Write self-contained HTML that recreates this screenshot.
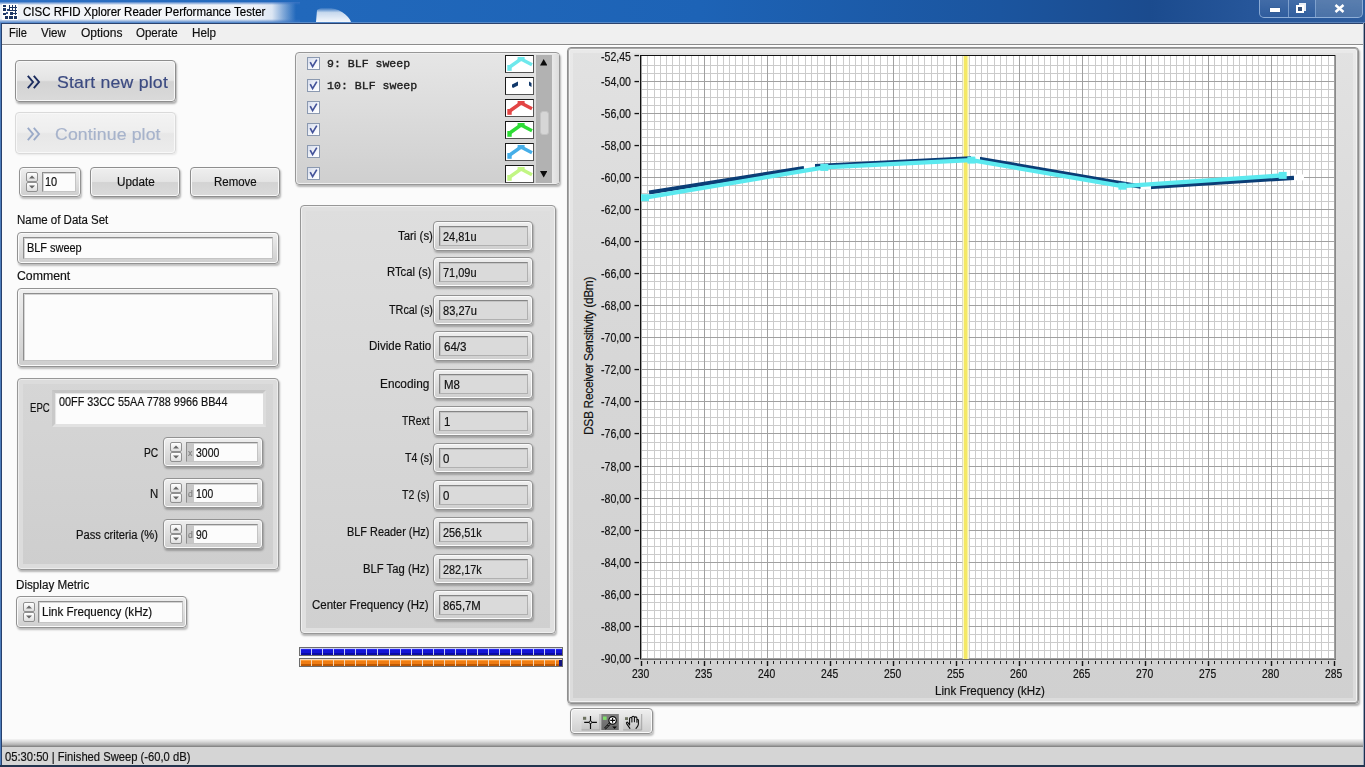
<!DOCTYPE html><html><head><meta charset="utf-8"><title>CISC RFID Xplorer Reader Performance Tester</title><style>
*{box-sizing:border-box;margin:0;padding:0}
html,body{width:1365px;height:767px;overflow:hidden;background:#fbfbfb}
body{font-family:"Liberation Sans",sans-serif;font-size:12px;color:#111;position:relative}
.a{position:absolute}
.t{position:absolute;white-space:nowrap}
.frame{position:absolute;border:1px solid #929292;border-radius:4px;background:linear-gradient(#efefef,#e0e0e0 45%,#cecece);box-shadow:1px 2px 2px rgba(0,0,0,.25), inset 0 0 0 1px #fafafa}
.btn{position:absolute;border:1px solid #8e8e8e;border-radius:4px;background:linear-gradient(#efefef 0,#e4e4e4 48%,#d3d3d3 52%,#dadada 100%);box-shadow:1px 2px 2px rgba(0,0,0,.3), inset 0 0 0 1px #f8f8f8}
.inw{position:absolute;background:#fcfcfc;border:1px solid #8e8e8e;border-right-color:#c4c4c4;border-bottom-color:#c4c4c4;box-shadow:inset 1px 1px 0 #d4d4d4}
.ing{position:absolute;background:#dadada;border:1px solid #858585;border-right-color:#b0b0b0;border-bottom-color:#b0b0b0;box-shadow:inset 1px 1px 0 #c4c4c4}
.panel{position:absolute;border:1px solid #979797;border-radius:4px;box-shadow:1px 2px 2px rgba(0,0,0,.28)}
</style></head><body>
<div class="a" style="left:0;top:0;width:1365px;height:23px;background:linear-gradient(90deg,#2e70c4 0,#2168bb 300px,#1d63b6 700px,#1b559f 1000px,#1b4b8e 1150px,#26569a 1250px,#2c5c9e 1365px)"></div>
<svg class="a" style="left:310px;top:0" width="50" height="23" viewBox="0 0 50 23"><defs><linearGradient id="sk" x1="0" y1="0" x2="0" y2="1"><stop offset="0" stop-color="#fff" stop-opacity="0"/><stop offset="0.35" stop-color="#fff" stop-opacity="0.75"/><stop offset="1" stop-color="#fff" stop-opacity="0.95"/></linearGradient></defs><path d="M6 22 L7 10 C12 6 24 7 32 12 C37 15 40 19 41 22 Z" fill="url(#sk)" style="filter:blur(.6px)"/></svg>
<div class="a" style="left:0;top:2px;width:330px;height:20px;background:linear-gradient(90deg,#edf1f7 0,#f5f7fa 120px,#eef2f8 255px,rgba(236,241,248,.92) 272px,rgba(232,238,247,.45) 284px,rgba(232,238,247,0) 296px)"></div>
<div class="a" style="left:0;top:2px;width:300px;height:3px;background:linear-gradient(rgba(58,116,196,.9),rgba(58,116,196,0))"></div>
<div class="a" style="left:0;top:19px;width:300px;height:3px;background:linear-gradient(rgba(58,116,196,0),rgba(58,116,196,.7))"></div>
<div class="a" style="left:0;top:22px;width:1365px;height:1px;background:rgba(150,180,220,.45)"></div>
<svg class="a" style="left:2px;top:4px" width="16" height="16" viewBox="0 0 16 16" shape-rendering="crispEdges"><rect width="16" height="16" fill="#fdfdfd"/><g fill="#1b3563"><rect x="1" y="1" width="3" height="2"/><rect x="1" y="4" width="3" height="3"/><rect x="4.5" y="4.5" width="3" height="2.5" fill="#2b477a"/><rect x="1" y="8.5" width="3" height="2.2"/><rect x="4" y="7.5" width="2" height="2" fill="#3a568a"/><rect x="7.5" y="8" width="3.5" height="2.8"/><rect x="3" y="11.8" width="3" height="3"/><rect x="6.8" y="11.8" width="4.4" height="3"/><rect x="12" y="11.8" width="3" height="3"/><rect x="7" y="1" width="1" height="6"/><rect x="10" y="1" width="1" height="6"/><rect x="13" y="1" width="1" height="10"/><rect x="6.5" y="3" width="8.5" height="0.8"/><rect x="6.5" y="6" width="8.5" height="0.8"/><rect x="11" y="9" width="4" height="0.8"/></g></svg>
<div class="t" style="left:23.20px;top:4.44px;font-size:12px;line-height:16px;height:16px;letter-spacing:0.000px;color:#000;font-family:'Liberation Sans',sans-serif;-webkit-text-stroke:0.18px #000;transform-origin:0 0;transform:scaleX(0.9598);">CISC RFID Xplorer Reader Performance Tester</div>
<div class="a" style="left:1259px;top:-4px;width:104px;height:22px;border:1px solid rgba(190,215,245,.6);border-radius:0 0 5px 5px;background:linear-gradient(rgba(255,255,255,.14),rgba(255,255,255,.04))"></div>
<div class="a" style="left:1288px;top:0;width:1px;height:17px;background:rgba(190,215,245,.5)"></div>
<div class="a" style="left:1315px;top:0;width:1px;height:17px;background:rgba(190,215,245,.5)"></div>
<div class="a" style="left:1316px;top:0;width:46px;height:17px;background:rgba(150,170,190,.25)"></div>
<div class="a" style="left:1270px;top:8px;width:10px;height:4px;background:#fff;box-shadow:0 0 1px #234"></div>
<div class="a" style="left:1299px;top:3px;width:7px;height:8px;border:2px solid #e8eef6"></div><div class="a" style="left:1296px;top:5px;width:8px;height:8px;border:2.5px solid #fff;background:#35507a"></div>
<svg class="a" style="left:1334px;top:3.5px" width="11" height="9" viewBox="0 0 11 9"><path d="M1.5 1 L9.5 8 M9.5 1 L1.5 8" stroke="#fff" stroke-width="2.5"/></svg>
<div class="a" style="left:0;top:23px;width:1365px;height:22px;background:#f0f0f0;border-bottom:1px solid #8c8c8c;border-top:1px solid #2b436e"></div>
<div class="a" style="left:0;top:45px;width:1365px;height:1px;background:#fff"></div>
<div class="t" style="left:9.20px;top:24.74px;font-size:12px;line-height:16px;height:16px;letter-spacing:0.000px;color:#111;font-family:'Liberation Sans',sans-serif;-webkit-text-stroke:0.18px #111;transform-origin:0 0;transform:scaleX(0.9251);">File</div>
<div class="t" style="left:41.00px;top:24.74px;font-size:12px;line-height:16px;height:16px;letter-spacing:0.000px;color:#111;font-family:'Liberation Sans',sans-serif;-webkit-text-stroke:0.18px #111;transform-origin:0 0;transform:scaleX(0.9671);">View</div>
<div class="t" style="left:80.60px;top:24.74px;font-size:12px;line-height:16px;height:16px;letter-spacing:0.000px;color:#111;font-family:'Liberation Sans',sans-serif;-webkit-text-stroke:0.18px #111;transform-origin:0 0;transform:scaleX(1.0012);">Options</div>
<div class="t" style="left:136.40px;top:24.74px;font-size:12px;line-height:16px;height:16px;letter-spacing:0.000px;color:#111;font-family:'Liberation Sans',sans-serif;-webkit-text-stroke:0.18px #111;transform-origin:0 0;transform:scaleX(0.9596);">Operate</div>
<div class="t" style="left:192.40px;top:24.74px;font-size:12px;line-height:16px;height:16px;letter-spacing:0.000px;color:#111;font-family:'Liberation Sans',sans-serif;-webkit-text-stroke:0.18px #111;transform-origin:0 0;transform:scaleX(0.9717);">Help</div>
<div class="a" style="left:0;top:23px;width:2px;height:744px;background:linear-gradient(90deg,#4d7dbc 0,#4d7dbc 55%,#27406c 56%)"></div>
<div class="a" style="left:1363px;top:23px;width:2px;height:744px;background:linear-gradient(90deg,#9aa6ba 0,#9aa6ba 40%,#1c3050 41%)"></div>
<div class="btn" style="left:15px;top:60px;width:161px;height:42px"></div>
<svg class="a" style="left:27px;top:74.5px" width="14" height="14" viewBox="0 0 14 14"><path d="M0.8 0.8 L6 7 L0.8 13.2 M6.8 0.8 L12 7 L6.8 13.2" fill="none" stroke="#1b2c5e" stroke-width="1.9"/></svg>
<div class="t" style="left:57.40px;top:71.51px;font-size:17px;line-height:22px;height:22px;letter-spacing:0.199px;color:#3b4a80;font-family:'Liberation Sans',sans-serif;-webkit-text-stroke:0.18px #3b4a80;transform-origin:0 0;transform:scaleX(1.0400);">Start new plot</div>
<div class="btn" style="left:15px;top:112px;width:161px;height:42px;border-color:#dadada;background:linear-gradient(#f3f3f3 0,#eeeeee 48%,#e7e7e7 52%,#ececec 100%);box-shadow:1px 1px 2px rgba(0,0,0,.08), inset 0 0 0 1px #f8f8f8"></div>
<svg class="a" style="left:27px;top:126.5px" width="14" height="14" viewBox="0 0 14 14"><path d="M0.8 0.8 L6 7 L0.8 13.2 M6.8 0.8 L12 7 L6.8 13.2" fill="none" stroke="#9aaac8" stroke-width="1.9"/></svg>
<div class="t" style="left:54.50px;top:123.91px;font-size:17px;line-height:22px;height:22px;letter-spacing:0.104px;color:#a7b3cb;font-family:'Liberation Sans',sans-serif;-webkit-text-stroke:0.18px #a7b3cb;transform-origin:0 0;transform:scaleX(1.0400);">Continue plot</div>
<div class="frame" style="left:19px;top:167px;width:62px;height:30px"></div>
<div class="a" style="left:26px;top:172px;width:12px;height:10px;border:1px solid #909090;border-radius:2px;background:linear-gradient(#ffffff,#dedede)"></div>
<div class="a" style="left:26px;top:182px;width:12px;height:10px;border:1px solid #909090;border-radius:2px;background:linear-gradient(#ffffff,#dedede)"></div>
<svg class="a" style="left:29px;top:175px" width="6" height="14" viewBox="0 0 6 14"><path d="M0 3.6 L3 0.4 L6 3.6 Z M0 10.4 L3 13.6 L6 10.4 Z" fill="#666"/></svg>
<div class="inw" style="left:42px;top:172px;width:34px;height:20px"></div>
<div class="t" style="left:45.40px;top:174.44px;font-size:12px;line-height:16px;height:16px;letter-spacing:0.000px;color:#111;font-family:'Liberation Sans',sans-serif;-webkit-text-stroke:0.18px #111;transform-origin:0 0;transform:scaleX(0.9139);">10</div>
<div class="btn" style="left:90px;top:167px;width:90px;height:30px"></div>
<div class="t" style="left:117.40px;top:173.84px;font-size:12px;line-height:16px;height:16px;letter-spacing:0.000px;color:#111;font-family:'Liberation Sans',sans-serif;-webkit-text-stroke:0.18px #111;transform-origin:0 0;transform:scaleX(0.9742);">Update</div>
<div class="btn" style="left:190px;top:167px;width:90px;height:30px"></div>
<div class="t" style="left:214.30px;top:173.84px;font-size:12px;line-height:16px;height:16px;letter-spacing:0.000px;color:#111;font-family:'Liberation Sans',sans-serif;-webkit-text-stroke:0.18px #111;transform-origin:0 0;transform:scaleX(0.9553);">Remove</div>
<div class="t" style="left:16.60px;top:211.94px;font-size:12px;line-height:16px;height:16px;letter-spacing:0.000px;color:#111;font-family:'Liberation Sans',sans-serif;-webkit-text-stroke:0.18px #111;transform-origin:0 0;transform:scaleX(0.9570);">Name of Data Set</div>
<div class="frame" style="left:17px;top:232px;width:262px;height:32px"></div>
<div class="inw" style="left:23px;top:237px;width:250px;height:22px"></div>
<div class="t" style="left:27.30px;top:240.34px;font-size:12px;line-height:16px;height:16px;letter-spacing:0.000px;color:#111;font-family:'Liberation Sans',sans-serif;-webkit-text-stroke:0.18px #111;transform-origin:0 0;transform:scaleX(0.9109);">BLF sweep</div>
<div class="t" style="left:16.60px;top:268.04px;font-size:12px;line-height:16px;height:16px;letter-spacing:0.000px;color:#111;font-family:'Liberation Sans',sans-serif;-webkit-text-stroke:0.18px #111;transform-origin:0 0;transform:scaleX(1.0231);">Comment</div>
<div class="frame" style="left:17px;top:288px;width:262px;height:79px"></div>
<div class="inw" style="left:23px;top:293px;width:250px;height:68px"></div>
<div class="panel" style="left:17px;top:378px;width:262px;height:192px;background:linear-gradient(#d6d6d6,#cecece);box-shadow:1px 2px 2px rgba(0,0,0,.28), inset 0 0 0 1px #ececec, inset 0 0 0 5px #dcdcdc"></div>
<div class="t" style="left:29.50px;top:399.54px;font-size:12px;line-height:16px;height:16px;letter-spacing:0.000px;color:#111;font-family:'Liberation Sans',sans-serif;-webkit-text-stroke:0.18px #111;transform-origin:0 0;transform:scaleX(0.7992);">EPC</div>
<div class="a" style="left:52px;top:390px;width:214px;height:37px;background:#fcfcfc;border:3px solid #e2e2e2;border-top-color:#c4c4c4;border-left-color:#c9c9c9;border-right-color:#dcdcdc;box-shadow:inset 1px 1px 1px #e4e4e4"></div>
<div class="t" style="left:58.70px;top:394.14px;font-size:12px;line-height:16px;height:16px;letter-spacing:0.000px;color:#111;font-family:'Liberation Sans',sans-serif;-webkit-text-stroke:0.18px #111;transform-origin:0 0;transform:scaleX(0.9015);">00FF 33CC 55AA 7788 9966 BB44</div>
<div class="frame" style="left:163px;top:437px;width:100px;height:30px"></div>
<div class="a" style="left:169.5px;top:442px;width:12px;height:10px;border:1px solid #909090;border-radius:2px;background:linear-gradient(#ffffff,#dedede)"></div>
<div class="a" style="left:169.5px;top:452px;width:12px;height:10px;border:1px solid #909090;border-radius:2px;background:linear-gradient(#ffffff,#dedede)"></div>
<svg class="a" style="left:172.5px;top:445px" width="6" height="14" viewBox="0 0 6 14"><path d="M0 3.6 L3 0.4 L6 3.6 Z M0 10.4 L3 13.6 L6 10.4 Z" fill="#666"/></svg>
<div class="inw" style="left:186px;top:442px;width:72px;height:20px"></div>
<div class="a" style="left:187px;top:443px;width:7px;height:18px;background:#c8c8c8"></div>
<div class="t" style="left:188.00px;top:446.88px;font-size:9px;line-height:13px;height:13px;letter-spacing:0.000px;color:#808080;font-family:'Liberation Sans',sans-serif;-webkit-text-stroke:0.18px #808080;transform-origin:0 0;transform:scaleX(0.9550);">x</div>
<div class="t" style="left:196.10px;top:444.64px;font-size:12px;line-height:16px;height:16px;letter-spacing:0.000px;color:#111;font-family:'Liberation Sans',sans-serif;-webkit-text-stroke:0.18px #111;transform-origin:0 0;transform:scaleX(0.8727);">3000</div>
<div class="t" style="left:143.60px;top:444.64px;font-size:12px;line-height:16px;height:16px;letter-spacing:0.000px;color:#111;font-family:'Liberation Sans',sans-serif;-webkit-text-stroke:0.18px #111;transform-origin:0 0;transform:scaleX(0.8529);">PC</div>
<div class="frame" style="left:163px;top:478px;width:100px;height:30px"></div>
<div class="a" style="left:169.5px;top:483px;width:12px;height:10px;border:1px solid #909090;border-radius:2px;background:linear-gradient(#ffffff,#dedede)"></div>
<div class="a" style="left:169.5px;top:493px;width:12px;height:10px;border:1px solid #909090;border-radius:2px;background:linear-gradient(#ffffff,#dedede)"></div>
<svg class="a" style="left:172.5px;top:486px" width="6" height="14" viewBox="0 0 6 14"><path d="M0 3.6 L3 0.4 L6 3.6 Z M0 10.4 L3 13.6 L6 10.4 Z" fill="#666"/></svg>
<div class="inw" style="left:186px;top:483px;width:72px;height:20px"></div>
<div class="a" style="left:187px;top:484px;width:7px;height:18px;background:#c8c8c8"></div>
<div class="t" style="left:188.00px;top:487.88px;font-size:9px;line-height:13px;height:13px;letter-spacing:0.000px;color:#808080;font-family:'Liberation Sans',sans-serif;-webkit-text-stroke:0.18px #808080;transform-origin:0 0;transform:scaleX(0.9550);">d</div>
<div class="t" style="left:196.10px;top:485.64px;font-size:12px;line-height:16px;height:16px;letter-spacing:0.000px;color:#111;font-family:'Liberation Sans',sans-serif;-webkit-text-stroke:0.18px #111;transform-origin:0 0;transform:scaleX(0.8550);">100</div>
<div class="t" style="left:149.60px;top:485.64px;font-size:12px;line-height:16px;height:16px;letter-spacing:0.000px;color:#111;font-family:'Liberation Sans',sans-serif;-webkit-text-stroke:0.18px #111;transform-origin:0 0;transform:scaleX(0.9480);">N</div>
<div class="frame" style="left:163px;top:519px;width:100px;height:30px"></div>
<div class="a" style="left:169.5px;top:524px;width:12px;height:10px;border:1px solid #909090;border-radius:2px;background:linear-gradient(#ffffff,#dedede)"></div>
<div class="a" style="left:169.5px;top:534px;width:12px;height:10px;border:1px solid #909090;border-radius:2px;background:linear-gradient(#ffffff,#dedede)"></div>
<svg class="a" style="left:172.5px;top:527px" width="6" height="14" viewBox="0 0 6 14"><path d="M0 3.6 L3 0.4 L6 3.6 Z M0 10.4 L3 13.6 L6 10.4 Z" fill="#666"/></svg>
<div class="inw" style="left:186px;top:524px;width:72px;height:20px"></div>
<div class="a" style="left:187px;top:525px;width:7px;height:18px;background:#c8c8c8"></div>
<div class="t" style="left:188.00px;top:528.88px;font-size:9px;line-height:13px;height:13px;letter-spacing:0.000px;color:#808080;font-family:'Liberation Sans',sans-serif;-webkit-text-stroke:0.18px #808080;transform-origin:0 0;transform:scaleX(0.9550);">d</div>
<div class="t" style="left:196.10px;top:526.64px;font-size:12px;line-height:16px;height:16px;letter-spacing:0.000px;color:#111;font-family:'Liberation Sans',sans-serif;-webkit-text-stroke:0.18px #111;transform-origin:0 0;transform:scaleX(0.8614);">90</div>
<div class="t" style="left:76.40px;top:526.64px;font-size:12px;line-height:16px;height:16px;letter-spacing:0.000px;color:#111;font-family:'Liberation Sans',sans-serif;-webkit-text-stroke:0.18px #111;transform-origin:0 0;transform:scaleX(0.9318);">Pass criteria (%)</div>
<div class="t" style="left:15.80px;top:576.84px;font-size:12px;line-height:16px;height:16px;letter-spacing:0.000px;color:#111;font-family:'Liberation Sans',sans-serif;-webkit-text-stroke:0.18px #111;transform-origin:0 0;transform:scaleX(0.9728);">Display Metric</div>
<div class="frame" style="left:16px;top:596px;width:171px;height:32px"></div>
<div class="a" style="left:22.5px;top:601.5px;width:12px;height:10px;border:1px solid #909090;border-radius:2px;background:linear-gradient(#ffffff,#dedede)"></div>
<div class="a" style="left:22.5px;top:611.5px;width:12px;height:10px;border:1px solid #909090;border-radius:2px;background:linear-gradient(#ffffff,#dedede)"></div>
<svg class="a" style="left:25.5px;top:604.5px" width="6" height="14" viewBox="0 0 6 14"><path d="M0 3.6 L3 0.4 L6 3.6 Z M0 10.4 L3 13.6 L6 10.4 Z" fill="#666"/></svg>
<div class="inw" style="left:38px;top:601px;width:145px;height:22px"></div>
<div class="t" style="left:42.30px;top:603.84px;font-size:12px;line-height:16px;height:16px;letter-spacing:0.000px;color:#111;font-family:'Liberation Sans',sans-serif;-webkit-text-stroke:0.18px #111;transform-origin:0 0;transform:scaleX(0.9662);">Link Frequency (kHz)</div>
<div class="panel" style="left:295px;top:52px;width:265px;height:133px;background:linear-gradient(#e6e6e6,#cfcfcf);box-shadow:1px 2px 2px rgba(0,0,0,.28), inset 0 0 0 1px #eee"></div>
<div class="a" style="left:552px;top:54px;width:7px;height:129px;background:linear-gradient(90deg,#e9e9e9,#dcdcdc)"></div>
<div class="a" style="left:307px;top:57px;width:13px;height:13px;border:1px solid #8b99b0;background:linear-gradient(135deg,#d5dcec,#f4f6fb 60%,#fff)"></div>
<svg class="a" style="left:308px;top:58px" width="11" height="11" viewBox="0 0 11 11"><path d="M2.2 4.2 L4.6 8.6 L8.8 1.6" fill="none" stroke="#44539a" stroke-width="1.7"/></svg>
<div class="a" style="left:505px;top:55px;width:29px;height:18px;background:#fff;border:1px solid #1a1a1a;border-right-color:#555;border-bottom-color:#555"></div>
<svg class="a" style="left:506px;top:56px" width="27" height="16" viewBox="0 0 27 16"><path d="M3 11.5 L15 3 L26 8.8" fill="none" stroke="#6ee8ec" stroke-width="3.5"/><rect x="1.3" y="9" width="4.4" height="5.8" fill="#6ee8ec"/><rect x="11.6" y="1" width="7" height="3.4" fill="#6ee8ec"/></svg>
<div class="a" style="left:307px;top:79px;width:13px;height:13px;border:1px solid #8b99b0;background:linear-gradient(135deg,#d5dcec,#f4f6fb 60%,#fff)"></div>
<svg class="a" style="left:308px;top:80px" width="11" height="11" viewBox="0 0 11 11"><path d="M2.2 4.2 L4.6 8.6 L8.8 1.6" fill="none" stroke="#44539a" stroke-width="1.7"/></svg>
<div class="a" style="left:505px;top:77px;width:29px;height:18px;background:#fff;border:1px solid #1a1a1a;border-right-color:#555;border-bottom-color:#555"></div>
<svg class="a" style="left:506px;top:78px" width="27" height="16" viewBox="0 0 27 16"><path d="M6 6.5 L12 3.5 L12 7.5 L7 10 L6 9Z M23 3.5 L25.5 5 L25.5 9 L23 7.5Z" fill="#12396b"/></svg>
<div class="a" style="left:307px;top:101px;width:13px;height:13px;border:1px solid #8b99b0;background:linear-gradient(135deg,#d5dcec,#f4f6fb 60%,#fff)"></div>
<svg class="a" style="left:308px;top:102px" width="11" height="11" viewBox="0 0 11 11"><path d="M2.2 4.2 L4.6 8.6 L8.8 1.6" fill="none" stroke="#44539a" stroke-width="1.7"/></svg>
<div class="a" style="left:505px;top:99px;width:29px;height:18px;background:#fff;border:1px solid #1a1a1a;border-right-color:#555;border-bottom-color:#555"></div>
<svg class="a" style="left:506px;top:100px" width="27" height="16" viewBox="0 0 27 16"><path d="M3 11.5 L15 3 L26 8.8" fill="none" stroke="#e34545" stroke-width="3.5"/><rect x="1.3" y="9" width="4.4" height="5.8" fill="#e34545"/><rect x="11.6" y="1" width="7" height="3.4" fill="#e34545"/></svg>
<div class="a" style="left:307px;top:123px;width:13px;height:13px;border:1px solid #8b99b0;background:linear-gradient(135deg,#d5dcec,#f4f6fb 60%,#fff)"></div>
<svg class="a" style="left:308px;top:124px" width="11" height="11" viewBox="0 0 11 11"><path d="M2.2 4.2 L4.6 8.6 L8.8 1.6" fill="none" stroke="#44539a" stroke-width="1.7"/></svg>
<div class="a" style="left:505px;top:121px;width:29px;height:18px;background:#fff;border:1px solid #1a1a1a;border-right-color:#555;border-bottom-color:#555"></div>
<svg class="a" style="left:506px;top:122px" width="27" height="16" viewBox="0 0 27 16"><path d="M3 11.5 L15 3 L26 8.8" fill="none" stroke="#2edc36" stroke-width="3.5"/><rect x="1.3" y="9" width="4.4" height="5.8" fill="#2edc36"/><rect x="11.6" y="1" width="7" height="3.4" fill="#2edc36"/></svg>
<div class="a" style="left:307px;top:145px;width:13px;height:13px;border:1px solid #8b99b0;background:linear-gradient(135deg,#d5dcec,#f4f6fb 60%,#fff)"></div>
<svg class="a" style="left:308px;top:146px" width="11" height="11" viewBox="0 0 11 11"><path d="M2.2 4.2 L4.6 8.6 L8.8 1.6" fill="none" stroke="#44539a" stroke-width="1.7"/></svg>
<div class="a" style="left:505px;top:143px;width:29px;height:18px;background:#fff;border:1px solid #1a1a1a;border-right-color:#555;border-bottom-color:#555"></div>
<svg class="a" style="left:506px;top:144px" width="27" height="16" viewBox="0 0 27 16"><path d="M3 11.5 L15 3 L26 8.8" fill="none" stroke="#46aee8" stroke-width="3.5"/><rect x="1.3" y="9" width="4.4" height="5.8" fill="#46aee8"/><rect x="11.6" y="1" width="7" height="3.4" fill="#46aee8"/></svg>
<div class="a" style="left:307px;top:167px;width:13px;height:13px;border:1px solid #8b99b0;background:linear-gradient(135deg,#d5dcec,#f4f6fb 60%,#fff)"></div>
<svg class="a" style="left:308px;top:168px" width="11" height="11" viewBox="0 0 11 11"><path d="M2.2 4.2 L4.6 8.6 L8.8 1.6" fill="none" stroke="#44539a" stroke-width="1.7"/></svg>
<div class="a" style="left:505px;top:165px;width:29px;height:18px;background:#fff;border:1px solid #1a1a1a;border-right-color:#555;border-bottom-color:#555"></div>
<svg class="a" style="left:506px;top:166px" width="27" height="16" viewBox="0 0 27 16"><path d="M3 11.5 L15 3 L26 8.8" fill="none" stroke="#c2f684" stroke-width="3.5"/><rect x="1.3" y="9" width="4.4" height="5.8" fill="#c2f684"/><rect x="11.6" y="1" width="7" height="3.4" fill="#c2f684"/></svg>
<div class="t" style="left:326.50px;top:55.68px;font-size:11.6px;line-height:16px;height:16px;letter-spacing:0.000px;color:#1c1c1c;font-family:'Liberation Mono',monospace;-webkit-text-stroke:0.35px #1c1c1c;transform-origin:0 0;transform:scaleX(0.9958);">9: BLF sweep</div>
<div class="t" style="left:326.50px;top:77.68px;font-size:11.6px;line-height:16px;height:16px;letter-spacing:0.000px;color:#1c1c1c;font-family:'Liberation Mono',monospace;-webkit-text-stroke:0.35px #1c1c1c;transform-origin:0 0;transform:scaleX(0.9978);">10: BLF sweep</div>
<div class="a" style="left:536px;top:55px;width:16px;height:128px;background:#b2b2b2"></div>
<div class="a" style="left:540px;top:111px;width:9px;height:24px;background:#d6d6d6;border:1px solid #c4c4c4;border-radius:3px"></div>
<svg class="a" style="left:539.8px;top:59.4px" width="7.4" height="6.6" viewBox="0 0 8 7"><path d="M0 7 L4 0 L8 7Z" fill="#0a0a0a"/></svg>
<svg class="a" style="left:539.8px;top:171px" width="7.4" height="6.6" viewBox="0 0 8 7"><path d="M0 0 L4 7 L8 0Z" fill="#0a0a0a"/></svg>
<div class="panel" style="left:300px;top:205px;width:256px;height:429px;background:linear-gradient(#dedede,#d0d0d0);box-shadow:1px 2px 2px rgba(0,0,0,.28), inset 0 0 0 1px #f0f0f0, inset 0 0 0 5px #e0e0e0"></div>
<div class="frame" style="left:433px;top:221px;width:100px;height:30px"></div>
<div class="ing" style="left:439px;top:226px;width:89px;height:20px"></div>
<div class="t" style="left:443.00px;top:228.54px;font-size:12px;line-height:16px;height:16px;letter-spacing:0.000px;color:#111;font-family:'Liberation Sans',sans-serif;-webkit-text-stroke:0.18px #111;transform-origin:0 0;transform:scaleX(0.9128);">24,81u</div>
<div class="t" style="left:397.70px;top:228.04px;font-size:12px;line-height:16px;height:16px;letter-spacing:0.000px;color:#111;font-family:'Liberation Sans',sans-serif;-webkit-text-stroke:0.18px #111;transform-origin:0 0;transform:scaleX(0.9523);">Tari (s)</div>
<div class="frame" style="left:433px;top:257px;width:100px;height:30px"></div>
<div class="ing" style="left:439px;top:262px;width:89px;height:20px"></div>
<div class="t" style="left:443.00px;top:264.54px;font-size:12px;line-height:16px;height:16px;letter-spacing:0.000px;color:#111;font-family:'Liberation Sans',sans-serif;-webkit-text-stroke:0.18px #111;transform-origin:0 0;transform:scaleX(0.9128);">71,09u</div>
<div class="t" style="left:387.30px;top:264.04px;font-size:12px;line-height:16px;height:16px;letter-spacing:0.000px;color:#111;font-family:'Liberation Sans',sans-serif;-webkit-text-stroke:0.18px #111;transform-origin:0 0;transform:scaleX(0.9406);">RTcal (s)</div>
<div class="frame" style="left:433px;top:295px;width:100px;height:30px"></div>
<div class="ing" style="left:439px;top:300px;width:89px;height:20px"></div>
<div class="t" style="left:442.60px;top:302.54px;font-size:12px;line-height:16px;height:16px;letter-spacing:0.000px;color:#111;font-family:'Liberation Sans',sans-serif;-webkit-text-stroke:0.18px #111;transform-origin:0 0;transform:scaleX(0.9237);">83,27u</div>
<div class="t" style="left:388.70px;top:302.04px;font-size:12px;line-height:16px;height:16px;letter-spacing:0.000px;color:#111;font-family:'Liberation Sans',sans-serif;-webkit-text-stroke:0.18px #111;transform-origin:0 0;transform:scaleX(0.9024);">TRcal (s)</div>
<div class="frame" style="left:433px;top:331px;width:100px;height:30px"></div>
<div class="ing" style="left:439px;top:336px;width:89px;height:20px"></div>
<div class="t" style="left:443.60px;top:338.54px;font-size:12px;line-height:16px;height:16px;letter-spacing:0.000px;color:#111;font-family:'Liberation Sans',sans-serif;-webkit-text-stroke:0.18px #111;transform-origin:0 0;transform:scaleX(0.9636);">64/3</div>
<div class="t" style="left:369.40px;top:338.04px;font-size:12px;line-height:16px;height:16px;letter-spacing:0.000px;color:#111;font-family:'Liberation Sans',sans-serif;-webkit-text-stroke:0.18px #111;transform-origin:0 0;transform:scaleX(0.9614);">Divide Ratio</div>
<div class="frame" style="left:433px;top:369px;width:100px;height:30px"></div>
<div class="ing" style="left:439px;top:374px;width:89px;height:20px"></div>
<div class="t" style="left:443.60px;top:376.54px;font-size:12px;line-height:16px;height:16px;letter-spacing:0.000px;color:#111;font-family:'Liberation Sans',sans-serif;-webkit-text-stroke:0.18px #111;transform-origin:0 0;transform:scaleX(0.9550);">M8</div>
<div class="t" style="left:380.30px;top:376.04px;font-size:12px;line-height:16px;height:16px;letter-spacing:0.000px;color:#111;font-family:'Liberation Sans',sans-serif;-webkit-text-stroke:0.18px #111;transform-origin:0 0;transform:scaleX(0.9850);">Encoding</div>
<div class="frame" style="left:433px;top:406px;width:100px;height:30px"></div>
<div class="ing" style="left:439px;top:411px;width:89px;height:20px"></div>
<div class="t" style="left:443.50px;top:413.54px;font-size:12px;line-height:16px;height:16px;letter-spacing:0.000px;color:#111;font-family:'Liberation Sans',sans-serif;-webkit-text-stroke:0.18px #111;transform-origin:0 0;transform:scaleX(0.9550);">1</div>
<div class="t" style="left:402.10px;top:413.04px;font-size:12px;line-height:16px;height:16px;letter-spacing:0.000px;color:#111;font-family:'Liberation Sans',sans-serif;-webkit-text-stroke:0.18px #111;transform-origin:0 0;transform:scaleX(0.8594);">TRext</div>
<div class="frame" style="left:433px;top:443px;width:100px;height:30px"></div>
<div class="ing" style="left:439px;top:448px;width:89px;height:20px"></div>
<div class="t" style="left:443.00px;top:450.54px;font-size:12px;line-height:16px;height:16px;letter-spacing:0.000px;color:#111;font-family:'Liberation Sans',sans-serif;-webkit-text-stroke:0.18px #111;transform-origin:0 0;transform:scaleX(0.9550);">0</div>
<div class="t" style="left:405.10px;top:450.04px;font-size:12px;line-height:16px;height:16px;letter-spacing:0.000px;color:#111;font-family:'Liberation Sans',sans-serif;-webkit-text-stroke:0.18px #111;transform-origin:0 0;transform:scaleX(0.8772);">T4 (s)</div>
<div class="frame" style="left:433px;top:480px;width:100px;height:30px"></div>
<div class="ing" style="left:439px;top:485px;width:89px;height:20px"></div>
<div class="t" style="left:443.00px;top:487.54px;font-size:12px;line-height:16px;height:16px;letter-spacing:0.000px;color:#111;font-family:'Liberation Sans',sans-serif;-webkit-text-stroke:0.18px #111;transform-origin:0 0;transform:scaleX(0.9550);">0</div>
<div class="t" style="left:402.10px;top:487.04px;font-size:12px;line-height:16px;height:16px;letter-spacing:0.000px;color:#111;font-family:'Liberation Sans',sans-serif;-webkit-text-stroke:0.18px #111;transform-origin:0 0;transform:scaleX(0.8772);">T2 (s)</div>
<div class="frame" style="left:433px;top:517px;width:100px;height:30px"></div>
<div class="ing" style="left:439px;top:522px;width:89px;height:20px"></div>
<div class="t" style="left:443.00px;top:524.54px;font-size:12px;line-height:16px;height:16px;letter-spacing:0.000px;color:#111;font-family:'Liberation Sans',sans-serif;-webkit-text-stroke:0.18px #111;transform-origin:0 0;transform:scaleX(0.9076);">256,51k</div>
<div class="t" style="left:347.20px;top:524.04px;font-size:12px;line-height:16px;height:16px;letter-spacing:0.000px;color:#111;font-family:'Liberation Sans',sans-serif;-webkit-text-stroke:0.18px #111;transform-origin:0 0;transform:scaleX(0.9085);">BLF Reader (Hz)</div>
<div class="frame" style="left:433px;top:554px;width:100px;height:30px"></div>
<div class="ing" style="left:439px;top:559px;width:89px;height:20px"></div>
<div class="t" style="left:443.00px;top:561.54px;font-size:12px;line-height:16px;height:16px;letter-spacing:0.000px;color:#111;font-family:'Liberation Sans',sans-serif;-webkit-text-stroke:0.18px #111;transform-origin:0 0;transform:scaleX(0.9076);">282,17k</div>
<div class="t" style="left:363.40px;top:561.04px;font-size:12px;line-height:16px;height:16px;letter-spacing:0.000px;color:#111;font-family:'Liberation Sans',sans-serif;-webkit-text-stroke:0.18px #111;transform-origin:0 0;transform:scaleX(0.9397);">BLF Tag (Hz)</div>
<div class="frame" style="left:433px;top:590px;width:100px;height:30px"></div>
<div class="ing" style="left:439px;top:595px;width:89px;height:20px"></div>
<div class="t" style="left:442.60px;top:597.54px;font-size:12px;line-height:16px;height:16px;letter-spacing:0.000px;color:#111;font-family:'Liberation Sans',sans-serif;-webkit-text-stroke:0.18px #111;transform-origin:0 0;transform:scaleX(0.9438);">865,7M</div>
<div class="t" style="left:311.60px;top:597.04px;font-size:12px;line-height:16px;height:16px;letter-spacing:0.000px;color:#111;font-family:'Liberation Sans',sans-serif;-webkit-text-stroke:0.18px #111;transform-origin:0 0;transform:scaleX(0.9553);">Center Frequency (Hz)</div>
<div class="a" style="left:299px;top:647px;width:264px;height:9px;border:1px solid #6c6c6c;background:#c9cdf6"></div>
<svg class="a" style="left:300px;top:648px" width="262" height="7" viewBox="0 0 262 7" shape-rendering="crispEdges"><rect x="1" y="0.6" width="10" height="2" fill="#2626ee"/><rect x="1" y="2" width="10" height="3" fill="#1414d6"/><rect x="1" y="5" width="10" height="2" fill="#0b0ba4"/><rect x="12" y="0.6" width="10" height="2" fill="#2626ee"/><rect x="12" y="2" width="10" height="3" fill="#1414d6"/><rect x="12" y="5" width="10" height="2" fill="#0b0ba4"/><rect x="23" y="0.6" width="10" height="2" fill="#2626ee"/><rect x="23" y="2" width="10" height="3" fill="#1414d6"/><rect x="23" y="5" width="10" height="2" fill="#0b0ba4"/><rect x="34" y="0.6" width="10" height="2" fill="#2626ee"/><rect x="34" y="2" width="10" height="3" fill="#1414d6"/><rect x="34" y="5" width="10" height="2" fill="#0b0ba4"/><rect x="45" y="0.6" width="10" height="2" fill="#2626ee"/><rect x="45" y="2" width="10" height="3" fill="#1414d6"/><rect x="45" y="5" width="10" height="2" fill="#0b0ba4"/><rect x="56" y="0.6" width="10" height="2" fill="#2626ee"/><rect x="56" y="2" width="10" height="3" fill="#1414d6"/><rect x="56" y="5" width="10" height="2" fill="#0b0ba4"/><rect x="67" y="0.6" width="10" height="2" fill="#2626ee"/><rect x="67" y="2" width="10" height="3" fill="#1414d6"/><rect x="67" y="5" width="10" height="2" fill="#0b0ba4"/><rect x="78" y="0.6" width="11" height="2" fill="#2626ee"/><rect x="78" y="2" width="11" height="3" fill="#1414d6"/><rect x="78" y="5" width="11" height="2" fill="#0b0ba4"/><rect x="90" y="0.6" width="10" height="2" fill="#2626ee"/><rect x="90" y="2" width="10" height="3" fill="#1414d6"/><rect x="90" y="5" width="10" height="2" fill="#0b0ba4"/><rect x="101" y="0.6" width="10" height="2" fill="#2626ee"/><rect x="101" y="2" width="10" height="3" fill="#1414d6"/><rect x="101" y="5" width="10" height="2" fill="#0b0ba4"/><rect x="112" y="0.6" width="10" height="2" fill="#2626ee"/><rect x="112" y="2" width="10" height="3" fill="#1414d6"/><rect x="112" y="5" width="10" height="2" fill="#0b0ba4"/><rect x="123" y="0.6" width="10" height="2" fill="#2626ee"/><rect x="123" y="2" width="10" height="3" fill="#1414d6"/><rect x="123" y="5" width="10" height="2" fill="#0b0ba4"/><rect x="134" y="0.6" width="10" height="2" fill="#2626ee"/><rect x="134" y="2" width="10" height="3" fill="#1414d6"/><rect x="134" y="5" width="10" height="2" fill="#0b0ba4"/><rect x="145" y="0.6" width="10" height="2" fill="#2626ee"/><rect x="145" y="2" width="10" height="3" fill="#1414d6"/><rect x="145" y="5" width="10" height="2" fill="#0b0ba4"/><rect x="156" y="0.6" width="10" height="2" fill="#2626ee"/><rect x="156" y="2" width="10" height="3" fill="#1414d6"/><rect x="156" y="5" width="10" height="2" fill="#0b0ba4"/><rect x="167" y="0.6" width="10" height="2" fill="#2626ee"/><rect x="167" y="2" width="10" height="3" fill="#1414d6"/><rect x="167" y="5" width="10" height="2" fill="#0b0ba4"/><rect x="178" y="0.6" width="10" height="2" fill="#2626ee"/><rect x="178" y="2" width="10" height="3" fill="#1414d6"/><rect x="178" y="5" width="10" height="2" fill="#0b0ba4"/><rect x="189" y="0.6" width="10" height="2" fill="#2626ee"/><rect x="189" y="2" width="10" height="3" fill="#1414d6"/><rect x="189" y="5" width="10" height="2" fill="#0b0ba4"/><rect x="200" y="0.6" width="10" height="2" fill="#2626ee"/><rect x="200" y="2" width="10" height="3" fill="#1414d6"/><rect x="200" y="5" width="10" height="2" fill="#0b0ba4"/><rect x="211" y="0.6" width="10" height="2" fill="#2626ee"/><rect x="211" y="2" width="10" height="3" fill="#1414d6"/><rect x="211" y="5" width="10" height="2" fill="#0b0ba4"/><rect x="222" y="0.6" width="11" height="2" fill="#2626ee"/><rect x="222" y="2" width="11" height="3" fill="#1414d6"/><rect x="222" y="5" width="11" height="2" fill="#0b0ba4"/><rect x="234" y="0.6" width="10" height="2" fill="#2626ee"/><rect x="234" y="2" width="10" height="3" fill="#1414d6"/><rect x="234" y="5" width="10" height="2" fill="#0b0ba4"/><rect x="245" y="0.6" width="10" height="2" fill="#2626ee"/><rect x="245" y="2" width="10" height="3" fill="#1414d6"/><rect x="245" y="5" width="10" height="2" fill="#0b0ba4"/><rect x="256" y="0.6" width="6" height="2" fill="#2626ee"/><rect x="256" y="2" width="6" height="3" fill="#1414d6"/><rect x="256" y="5" width="6" height="2" fill="#0b0ba4"/></svg>
<div class="a" style="left:299px;top:658px;width:264px;height:9px;border:1px solid #6c6c6c;background:#f3d9bd"></div>
<svg class="a" style="left:300px;top:659px" width="262" height="7" viewBox="0 0 262 7" shape-rendering="crispEdges"><rect x="1" y="0.6" width="10" height="2" fill="#ff9c34"/><rect x="1" y="2" width="10" height="3" fill="#ef7c12"/><rect x="1" y="5" width="10" height="2" fill="#bd5802"/><rect x="12" y="0.6" width="10" height="2" fill="#ff9c34"/><rect x="12" y="2" width="10" height="3" fill="#ef7c12"/><rect x="12" y="5" width="10" height="2" fill="#bd5802"/><rect x="23" y="0.6" width="10" height="2" fill="#ff9c34"/><rect x="23" y="2" width="10" height="3" fill="#ef7c12"/><rect x="23" y="5" width="10" height="2" fill="#bd5802"/><rect x="34" y="0.6" width="10" height="2" fill="#ff9c34"/><rect x="34" y="2" width="10" height="3" fill="#ef7c12"/><rect x="34" y="5" width="10" height="2" fill="#bd5802"/><rect x="45" y="0.6" width="10" height="2" fill="#ff9c34"/><rect x="45" y="2" width="10" height="3" fill="#ef7c12"/><rect x="45" y="5" width="10" height="2" fill="#bd5802"/><rect x="56" y="0.6" width="10" height="2" fill="#ff9c34"/><rect x="56" y="2" width="10" height="3" fill="#ef7c12"/><rect x="56" y="5" width="10" height="2" fill="#bd5802"/><rect x="67" y="0.6" width="10" height="2" fill="#ff9c34"/><rect x="67" y="2" width="10" height="3" fill="#ef7c12"/><rect x="67" y="5" width="10" height="2" fill="#bd5802"/><rect x="78" y="0.6" width="11" height="2" fill="#ff9c34"/><rect x="78" y="2" width="11" height="3" fill="#ef7c12"/><rect x="78" y="5" width="11" height="2" fill="#bd5802"/><rect x="90" y="0.6" width="10" height="2" fill="#ff9c34"/><rect x="90" y="2" width="10" height="3" fill="#ef7c12"/><rect x="90" y="5" width="10" height="2" fill="#bd5802"/><rect x="101" y="0.6" width="10" height="2" fill="#ff9c34"/><rect x="101" y="2" width="10" height="3" fill="#ef7c12"/><rect x="101" y="5" width="10" height="2" fill="#bd5802"/><rect x="112" y="0.6" width="10" height="2" fill="#ff9c34"/><rect x="112" y="2" width="10" height="3" fill="#ef7c12"/><rect x="112" y="5" width="10" height="2" fill="#bd5802"/><rect x="123" y="0.6" width="10" height="2" fill="#ff9c34"/><rect x="123" y="2" width="10" height="3" fill="#ef7c12"/><rect x="123" y="5" width="10" height="2" fill="#bd5802"/><rect x="134" y="0.6" width="10" height="2" fill="#ff9c34"/><rect x="134" y="2" width="10" height="3" fill="#ef7c12"/><rect x="134" y="5" width="10" height="2" fill="#bd5802"/><rect x="145" y="0.6" width="10" height="2" fill="#ff9c34"/><rect x="145" y="2" width="10" height="3" fill="#ef7c12"/><rect x="145" y="5" width="10" height="2" fill="#bd5802"/><rect x="156" y="0.6" width="10" height="2" fill="#ff9c34"/><rect x="156" y="2" width="10" height="3" fill="#ef7c12"/><rect x="156" y="5" width="10" height="2" fill="#bd5802"/><rect x="167" y="0.6" width="10" height="2" fill="#ff9c34"/><rect x="167" y="2" width="10" height="3" fill="#ef7c12"/><rect x="167" y="5" width="10" height="2" fill="#bd5802"/><rect x="178" y="0.6" width="10" height="2" fill="#ff9c34"/><rect x="178" y="2" width="10" height="3" fill="#ef7c12"/><rect x="178" y="5" width="10" height="2" fill="#bd5802"/><rect x="189" y="0.6" width="10" height="2" fill="#ff9c34"/><rect x="189" y="2" width="10" height="3" fill="#ef7c12"/><rect x="189" y="5" width="10" height="2" fill="#bd5802"/><rect x="200" y="0.6" width="10" height="2" fill="#ff9c34"/><rect x="200" y="2" width="10" height="3" fill="#ef7c12"/><rect x="200" y="5" width="10" height="2" fill="#bd5802"/><rect x="211" y="0.6" width="10" height="2" fill="#ff9c34"/><rect x="211" y="2" width="10" height="3" fill="#ef7c12"/><rect x="211" y="5" width="10" height="2" fill="#bd5802"/><rect x="222" y="0.6" width="11" height="2" fill="#ff9c34"/><rect x="222" y="2" width="11" height="3" fill="#ef7c12"/><rect x="222" y="5" width="11" height="2" fill="#bd5802"/><rect x="234" y="0.6" width="10" height="2" fill="#ff9c34"/><rect x="234" y="2" width="10" height="3" fill="#ef7c12"/><rect x="234" y="5" width="10" height="2" fill="#bd5802"/><rect x="245" y="0.6" width="10" height="2" fill="#ff9c34"/><rect x="245" y="2" width="10" height="3" fill="#ef7c12"/><rect x="245" y="5" width="10" height="2" fill="#bd5802"/><rect x="256" y="0.6" width="6" height="2" fill="#ff9c34"/><rect x="256" y="2" width="6" height="3" fill="#ef7c12"/><rect x="256" y="5" width="6" height="2" fill="#bd5802"/><rect x="259" y="0.6" width="3" height="6.4" fill="#141480"/></svg>
<div class="panel" style="left:567px;top:47px;width:792px;height:657px;border-color:#8f8f8f;background:linear-gradient(#e2e2e2,#d8d8d8 40%,#d0d0d0);box-shadow:1px 2px 2px rgba(0,0,0,.3), inset 0 0 0 1px #a8a8a8, inset 0 0 0 2px #f2f2f2, inset 0 0 0 5px rgba(255,255,255,.25)"></div>
<svg class="a" style="left:0;top:0" width="1365" height="767" viewBox="0 0 1365 767" font-family="Liberation Sans, sans-serif" font-size="12"><rect x="640" y="55" width="696" height="605" fill="#fff"/><path d="M647.5 55V660M654.5 55V660M660.5 55V660M666.5 55V660M672.5 55V660M679.5 55V660M685.5 55V660M691.5 55V660M698.5 55V660M710.5 55V660M717.5 55V660M723.5 55V660M729.5 55V660M735.5 55V660M742.5 55V660M748.5 55V660M754.5 55V660M761.5 55V660M773.5 55V660M780.5 55V660M786.5 55V660M792.5 55V660M798.5 55V660M805.5 55V660M811.5 55V660M817.5 55V660M824.5 55V660M836.5 55V660M843.5 55V660M849.5 55V660M855.5 55V660M861.5 55V660M868.5 55V660M874.5 55V660M880.5 55V660M887.5 55V660M899.5 55V660M906.5 55V660M912.5 55V660M918.5 55V660M924.5 55V660M931.5 55V660M937.5 55V660M943.5 55V660M950.5 55V660M962.5 55V660M969.5 55V660M975.5 55V660M981.5 55V660M987.5 55V660M994.5 55V660M1000.5 55V660M1006.5 55V660M1013.5 55V660M1025.5 55V660M1032.5 55V660M1038.5 55V660M1044.5 55V660M1050.5 55V660M1057.5 55V660M1063.5 55V660M1069.5 55V660M1076.5 55V660M1088.5 55V660M1095.5 55V660M1101.5 55V660M1107.5 55V660M1113.5 55V660M1120.5 55V660M1126.5 55V660M1132.5 55V660M1139.5 55V660M1151.5 55V660M1158.5 55V660M1164.5 55V660M1170.5 55V660M1176.5 55V660M1183.5 55V660M1189.5 55V660M1195.5 55V660M1202.5 55V660M1214.5 55V660M1221.5 55V660M1227.5 55V660M1233.5 55V660M1239.5 55V660M1246.5 55V660M1252.5 55V660M1258.5 55V660M1265.5 55V660M1277.5 55V660M1283.5 55V660M1290.5 55V660M1296.5 55V660M1302.5 55V660M1309.5 55V660M1315.5 55V660M1321.5 55V660M1328.5 55V660M640 650.5H1336M640 642.5H1336M640 634.5H1336M640 618.5H1336M640 610.5H1336M640 602.5H1336M640 586.5H1336M640 578.5H1336M640 570.5H1336M640 554.5H1336M640 546.5H1336M640 538.5H1336M640 522.5H1336M640 514.5H1336M640 506.5H1336M640 490.5H1336M640 482.5H1336M640 474.5H1336M640 458.5H1336M640 450.5H1336M640 442.5H1336M640 425.5H1336M640 417.5H1336M640 409.5H1336M640 393.5H1336M640 385.5H1336M640 377.5H1336M640 361.5H1336M640 353.5H1336M640 345.5H1336M640 329.5H1336M640 321.5H1336M640 313.5H1336M640 297.5H1336M640 289.5H1336M640 281.5H1336M640 265.5H1336M640 257.5H1336M640 249.5H1336M640 233.5H1336M640 225.5H1336M640 217.5H1336M640 201.5H1336M640 193.5H1336M640 185.5H1336M640 169.5H1336M640 161.5H1336M640 153.5H1336M640 137.5H1336M640 129.5H1336M640 121.5H1336M640 105.5H1336M640 97.5H1336M640 89.5H1336M640 73.5H1336M640 65.5H1336M640 55.5H1336" stroke="#cbcbcb" stroke-width="1" fill="none" shape-rendering="crispEdges"/><path d="M641.5 55V660M704.5 55V660M767.5 55V660M830.5 55V660M893.5 55V660M956.5 55V660M1019.5 55V660M1082.5 55V660M1145.5 55V660M1208.5 55V660M1271.5 55V660M1334.5 55V660M640 658.5H1336M640 626.5H1336M640 594.5H1336M640 562.5H1336M640 530.5H1336M640 498.5H1336M640 466.5H1336M640 433.5H1336M640 401.5H1336M640 369.5H1336M640 337.5H1336M640 305.5H1336M640 273.5H1336M640 241.5H1336M640 209.5H1336M640 177.5H1336M640 145.5H1336M640 113.5H1336M640 81.5H1336" stroke="#a0a0a0" stroke-width="1" fill="none" shape-rendering="crispEdges"/><rect x="962.6" y="55" width="6.2" height="605" fill="#fbf8c6"/><rect x="964" y="55" width="3.4" height="605" fill="#f4e864"/><rect x="640" y="55" width="1" height="605" fill="#111"/><rect x="640" y="55" width="696" height="1" fill="#111"/><rect x="1335" y="55" width="1" height="605" fill="#8a8a8a"/><rect x="640" y="659" width="696" height="1" fill="#6e6e6e"/><path d="M649 192.5 L804 168 M815 166 L975 158 L1145 187.4 L1294 177.8" stroke="#0b3d76" stroke-width="4.2" fill="none"/><rect x="804" y="162.5" width="11" height="5.9" fill="#fff"/><rect x="971" y="155.3" width="9" height="4.9" fill="#fff"/><rect x="1140.5" y="184.5" width="10.5" height="5.3" fill="#fff"/><rect x="1294" y="174.4" width="10" height="6.0" fill="#fff"/><path d="M645 197.7 L824.3 167.4 L971.4 160.1 L1122.4 186.2 L1282.7 175.4" stroke="#5be9ef" stroke-width="4.3" fill="none" stroke-linejoin="round"/><rect x="641" y="194.2" width="8" height="7" fill="#5be9ef"/><rect x="820.3" y="163.9" width="8" height="7" fill="#5be9ef"/><rect x="967.4" y="156.6" width="8" height="7" fill="#5be9ef"/><rect x="1118.4" y="182.7" width="8" height="7" fill="#5be9ef"/><rect x="1278.7" y="171.9" width="8" height="7" fill="#5be9ef"/><rect x="634.5" y="54.9" width="4.5" height="1.3" fill="#111"/><rect x="634.5" y="80.9" width="4.5" height="1.3" fill="#111"/><rect x="634.5" y="112.9" width="4.5" height="1.3" fill="#111"/><rect x="634.5" y="144.9" width="4.5" height="1.3" fill="#111"/><rect x="634.5" y="176.9" width="4.5" height="1.3" fill="#111"/><rect x="634.5" y="208.9" width="4.5" height="1.3" fill="#111"/><rect x="634.5" y="240.9" width="4.5" height="1.3" fill="#111"/><rect x="634.5" y="272.9" width="4.5" height="1.3" fill="#111"/><rect x="634.5" y="304.9" width="4.5" height="1.3" fill="#111"/><rect x="634.5" y="336.9" width="4.5" height="1.3" fill="#111"/><rect x="634.5" y="368.9" width="4.5" height="1.3" fill="#111"/><rect x="634.5" y="400.9" width="4.5" height="1.3" fill="#111"/><rect x="634.5" y="432.9" width="4.5" height="1.3" fill="#111"/><rect x="634.5" y="465.9" width="4.5" height="1.3" fill="#111"/><rect x="634.5" y="497.9" width="4.5" height="1.3" fill="#111"/><rect x="634.5" y="529.9" width="4.5" height="1.3" fill="#111"/><rect x="634.5" y="561.9" width="4.5" height="1.3" fill="#111"/><rect x="634.5" y="593.9" width="4.5" height="1.3" fill="#111"/><rect x="634.5" y="625.9" width="4.5" height="1.3" fill="#111"/><rect x="634.5" y="657.9" width="4.5" height="1.3" fill="#111"/><rect x="640.8" y="661" width="1.4" height="5" fill="#111"/><rect x="647" y="661" width="1" height="3" fill="#222"/><rect x="654" y="661" width="1" height="3" fill="#222"/><rect x="660" y="661" width="1" height="3" fill="#222"/><rect x="666" y="661" width="1" height="3" fill="#222"/><rect x="672" y="661" width="1" height="3" fill="#222"/><rect x="679" y="661" width="1" height="3" fill="#222"/><rect x="685" y="661" width="1" height="3" fill="#222"/><rect x="691" y="661" width="1" height="3" fill="#222"/><rect x="698" y="661" width="1" height="3" fill="#222"/><rect x="703.8" y="661" width="1.4" height="5" fill="#111"/><rect x="710" y="661" width="1" height="3" fill="#222"/><rect x="717" y="661" width="1" height="3" fill="#222"/><rect x="723" y="661" width="1" height="3" fill="#222"/><rect x="729" y="661" width="1" height="3" fill="#222"/><rect x="735" y="661" width="1" height="3" fill="#222"/><rect x="742" y="661" width="1" height="3" fill="#222"/><rect x="748" y="661" width="1" height="3" fill="#222"/><rect x="754" y="661" width="1" height="3" fill="#222"/><rect x="761" y="661" width="1" height="3" fill="#222"/><rect x="766.8" y="661" width="1.4" height="5" fill="#111"/><rect x="773" y="661" width="1" height="3" fill="#222"/><rect x="780" y="661" width="1" height="3" fill="#222"/><rect x="786" y="661" width="1" height="3" fill="#222"/><rect x="792" y="661" width="1" height="3" fill="#222"/><rect x="798" y="661" width="1" height="3" fill="#222"/><rect x="805" y="661" width="1" height="3" fill="#222"/><rect x="811" y="661" width="1" height="3" fill="#222"/><rect x="817" y="661" width="1" height="3" fill="#222"/><rect x="824" y="661" width="1" height="3" fill="#222"/><rect x="829.8" y="661" width="1.4" height="5" fill="#111"/><rect x="836" y="661" width="1" height="3" fill="#222"/><rect x="843" y="661" width="1" height="3" fill="#222"/><rect x="849" y="661" width="1" height="3" fill="#222"/><rect x="855" y="661" width="1" height="3" fill="#222"/><rect x="861" y="661" width="1" height="3" fill="#222"/><rect x="868" y="661" width="1" height="3" fill="#222"/><rect x="874" y="661" width="1" height="3" fill="#222"/><rect x="880" y="661" width="1" height="3" fill="#222"/><rect x="887" y="661" width="1" height="3" fill="#222"/><rect x="892.8" y="661" width="1.4" height="5" fill="#111"/><rect x="899" y="661" width="1" height="3" fill="#222"/><rect x="906" y="661" width="1" height="3" fill="#222"/><rect x="912" y="661" width="1" height="3" fill="#222"/><rect x="918" y="661" width="1" height="3" fill="#222"/><rect x="924" y="661" width="1" height="3" fill="#222"/><rect x="931" y="661" width="1" height="3" fill="#222"/><rect x="937" y="661" width="1" height="3" fill="#222"/><rect x="943" y="661" width="1" height="3" fill="#222"/><rect x="950" y="661" width="1" height="3" fill="#222"/><rect x="955.8" y="661" width="1.4" height="5" fill="#111"/><rect x="962" y="661" width="1" height="3" fill="#222"/><rect x="969" y="661" width="1" height="3" fill="#222"/><rect x="975" y="661" width="1" height="3" fill="#222"/><rect x="981" y="661" width="1" height="3" fill="#222"/><rect x="987" y="661" width="1" height="3" fill="#222"/><rect x="994" y="661" width="1" height="3" fill="#222"/><rect x="1000" y="661" width="1" height="3" fill="#222"/><rect x="1006" y="661" width="1" height="3" fill="#222"/><rect x="1013" y="661" width="1" height="3" fill="#222"/><rect x="1018.8" y="661" width="1.4" height="5" fill="#111"/><rect x="1025" y="661" width="1" height="3" fill="#222"/><rect x="1032" y="661" width="1" height="3" fill="#222"/><rect x="1038" y="661" width="1" height="3" fill="#222"/><rect x="1044" y="661" width="1" height="3" fill="#222"/><rect x="1050" y="661" width="1" height="3" fill="#222"/><rect x="1057" y="661" width="1" height="3" fill="#222"/><rect x="1063" y="661" width="1" height="3" fill="#222"/><rect x="1069" y="661" width="1" height="3" fill="#222"/><rect x="1076" y="661" width="1" height="3" fill="#222"/><rect x="1081.8" y="661" width="1.4" height="5" fill="#111"/><rect x="1088" y="661" width="1" height="3" fill="#222"/><rect x="1095" y="661" width="1" height="3" fill="#222"/><rect x="1101" y="661" width="1" height="3" fill="#222"/><rect x="1107" y="661" width="1" height="3" fill="#222"/><rect x="1113" y="661" width="1" height="3" fill="#222"/><rect x="1120" y="661" width="1" height="3" fill="#222"/><rect x="1126" y="661" width="1" height="3" fill="#222"/><rect x="1132" y="661" width="1" height="3" fill="#222"/><rect x="1139" y="661" width="1" height="3" fill="#222"/><rect x="1144.8" y="661" width="1.4" height="5" fill="#111"/><rect x="1151" y="661" width="1" height="3" fill="#222"/><rect x="1158" y="661" width="1" height="3" fill="#222"/><rect x="1164" y="661" width="1" height="3" fill="#222"/><rect x="1170" y="661" width="1" height="3" fill="#222"/><rect x="1176" y="661" width="1" height="3" fill="#222"/><rect x="1183" y="661" width="1" height="3" fill="#222"/><rect x="1189" y="661" width="1" height="3" fill="#222"/><rect x="1195" y="661" width="1" height="3" fill="#222"/><rect x="1202" y="661" width="1" height="3" fill="#222"/><rect x="1207.8" y="661" width="1.4" height="5" fill="#111"/><rect x="1214" y="661" width="1" height="3" fill="#222"/><rect x="1221" y="661" width="1" height="3" fill="#222"/><rect x="1227" y="661" width="1" height="3" fill="#222"/><rect x="1233" y="661" width="1" height="3" fill="#222"/><rect x="1239" y="661" width="1" height="3" fill="#222"/><rect x="1246" y="661" width="1" height="3" fill="#222"/><rect x="1252" y="661" width="1" height="3" fill="#222"/><rect x="1258" y="661" width="1" height="3" fill="#222"/><rect x="1265" y="661" width="1" height="3" fill="#222"/><rect x="1270.8" y="661" width="1.4" height="5" fill="#111"/><rect x="1277" y="661" width="1" height="3" fill="#222"/><rect x="1283" y="661" width="1" height="3" fill="#222"/><rect x="1290" y="661" width="1" height="3" fill="#222"/><rect x="1296" y="661" width="1" height="3" fill="#222"/><rect x="1302" y="661" width="1" height="3" fill="#222"/><rect x="1309" y="661" width="1" height="3" fill="#222"/><rect x="1315" y="661" width="1" height="3" fill="#222"/><rect x="1321" y="661" width="1" height="3" fill="#222"/><rect x="1328" y="661" width="1" height="3" fill="#222"/><rect x="1333.8" y="661" width="1.4" height="5" fill="#111"/></svg>
<div class="t" style="left:601.20px;top:48.54px;font-size:12px;line-height:16px;height:16px;letter-spacing:0.000px;color:#111;font-family:'Liberation Sans',sans-serif;-webkit-text-stroke:0.18px #111;transform-origin:0 0;transform:scaleX(0.8811);">-52,45</div>
<div class="t" style="left:601.20px;top:74.04px;font-size:12px;line-height:16px;height:16px;letter-spacing:0.000px;color:#111;font-family:'Liberation Sans',sans-serif;-webkit-text-stroke:0.18px #111;transform-origin:0 0;transform:scaleX(0.8811);">-54,00</div>
<div class="t" style="left:601.20px;top:106.04px;font-size:12px;line-height:16px;height:16px;letter-spacing:0.000px;color:#111;font-family:'Liberation Sans',sans-serif;-webkit-text-stroke:0.18px #111;transform-origin:0 0;transform:scaleX(0.8811);">-56,00</div>
<div class="t" style="left:601.20px;top:138.04px;font-size:12px;line-height:16px;height:16px;letter-spacing:0.000px;color:#111;font-family:'Liberation Sans',sans-serif;-webkit-text-stroke:0.18px #111;transform-origin:0 0;transform:scaleX(0.8811);">-58,00</div>
<div class="t" style="left:601.20px;top:170.04px;font-size:12px;line-height:16px;height:16px;letter-spacing:0.000px;color:#111;font-family:'Liberation Sans',sans-serif;-webkit-text-stroke:0.18px #111;transform-origin:0 0;transform:scaleX(0.8811);">-60,00</div>
<div class="t" style="left:601.20px;top:202.04px;font-size:12px;line-height:16px;height:16px;letter-spacing:0.000px;color:#111;font-family:'Liberation Sans',sans-serif;-webkit-text-stroke:0.18px #111;transform-origin:0 0;transform:scaleX(0.8811);">-62,00</div>
<div class="t" style="left:601.20px;top:234.04px;font-size:12px;line-height:16px;height:16px;letter-spacing:0.000px;color:#111;font-family:'Liberation Sans',sans-serif;-webkit-text-stroke:0.18px #111;transform-origin:0 0;transform:scaleX(0.8811);">-64,00</div>
<div class="t" style="left:601.20px;top:266.04px;font-size:12px;line-height:16px;height:16px;letter-spacing:0.000px;color:#111;font-family:'Liberation Sans',sans-serif;-webkit-text-stroke:0.18px #111;transform-origin:0 0;transform:scaleX(0.8811);">-66,00</div>
<div class="t" style="left:601.20px;top:298.04px;font-size:12px;line-height:16px;height:16px;letter-spacing:0.000px;color:#111;font-family:'Liberation Sans',sans-serif;-webkit-text-stroke:0.18px #111;transform-origin:0 0;transform:scaleX(0.8811);">-68,00</div>
<div class="t" style="left:601.20px;top:330.04px;font-size:12px;line-height:16px;height:16px;letter-spacing:0.000px;color:#111;font-family:'Liberation Sans',sans-serif;-webkit-text-stroke:0.18px #111;transform-origin:0 0;transform:scaleX(0.8811);">-70,00</div>
<div class="t" style="left:601.20px;top:362.04px;font-size:12px;line-height:16px;height:16px;letter-spacing:0.000px;color:#111;font-family:'Liberation Sans',sans-serif;-webkit-text-stroke:0.18px #111;transform-origin:0 0;transform:scaleX(0.8811);">-72,00</div>
<div class="t" style="left:601.20px;top:394.04px;font-size:12px;line-height:16px;height:16px;letter-spacing:0.000px;color:#111;font-family:'Liberation Sans',sans-serif;-webkit-text-stroke:0.18px #111;transform-origin:0 0;transform:scaleX(0.8811);">-74,00</div>
<div class="t" style="left:601.20px;top:426.04px;font-size:12px;line-height:16px;height:16px;letter-spacing:0.000px;color:#111;font-family:'Liberation Sans',sans-serif;-webkit-text-stroke:0.18px #111;transform-origin:0 0;transform:scaleX(0.8811);">-76,00</div>
<div class="t" style="left:601.20px;top:459.04px;font-size:12px;line-height:16px;height:16px;letter-spacing:0.000px;color:#111;font-family:'Liberation Sans',sans-serif;-webkit-text-stroke:0.18px #111;transform-origin:0 0;transform:scaleX(0.8811);">-78,00</div>
<div class="t" style="left:601.20px;top:491.04px;font-size:12px;line-height:16px;height:16px;letter-spacing:0.000px;color:#111;font-family:'Liberation Sans',sans-serif;-webkit-text-stroke:0.18px #111;transform-origin:0 0;transform:scaleX(0.8811);">-80,00</div>
<div class="t" style="left:601.20px;top:523.04px;font-size:12px;line-height:16px;height:16px;letter-spacing:0.000px;color:#111;font-family:'Liberation Sans',sans-serif;-webkit-text-stroke:0.18px #111;transform-origin:0 0;transform:scaleX(0.8811);">-82,00</div>
<div class="t" style="left:601.20px;top:555.04px;font-size:12px;line-height:16px;height:16px;letter-spacing:0.000px;color:#111;font-family:'Liberation Sans',sans-serif;-webkit-text-stroke:0.18px #111;transform-origin:0 0;transform:scaleX(0.8811);">-84,00</div>
<div class="t" style="left:601.20px;top:587.04px;font-size:12px;line-height:16px;height:16px;letter-spacing:0.000px;color:#111;font-family:'Liberation Sans',sans-serif;-webkit-text-stroke:0.18px #111;transform-origin:0 0;transform:scaleX(0.8811);">-86,00</div>
<div class="t" style="left:601.20px;top:619.04px;font-size:12px;line-height:16px;height:16px;letter-spacing:0.000px;color:#111;font-family:'Liberation Sans',sans-serif;-webkit-text-stroke:0.18px #111;transform-origin:0 0;transform:scaleX(0.8811);">-88,00</div>
<div class="t" style="left:601.20px;top:651.04px;font-size:12px;line-height:16px;height:16px;letter-spacing:0.000px;color:#111;font-family:'Liberation Sans',sans-serif;-webkit-text-stroke:0.18px #111;transform-origin:0 0;transform:scaleX(0.8811);">-90,00</div>
<div class="t" style="left:632.20px;top:665.84px;font-size:12px;line-height:16px;height:16px;letter-spacing:0.000px;color:#111;font-family:'Liberation Sans',sans-serif;-webkit-text-stroke:0.18px #111;transform-origin:0 0;transform:scaleX(0.8600);">230</div>
<div class="t" style="left:695.19px;top:665.84px;font-size:12px;line-height:16px;height:16px;letter-spacing:0.000px;color:#111;font-family:'Liberation Sans',sans-serif;-webkit-text-stroke:0.18px #111;transform-origin:0 0;transform:scaleX(0.8600);">235</div>
<div class="t" style="left:758.18px;top:665.84px;font-size:12px;line-height:16px;height:16px;letter-spacing:0.000px;color:#111;font-family:'Liberation Sans',sans-serif;-webkit-text-stroke:0.18px #111;transform-origin:0 0;transform:scaleX(0.8600);">240</div>
<div class="t" style="left:821.17px;top:665.84px;font-size:12px;line-height:16px;height:16px;letter-spacing:0.000px;color:#111;font-family:'Liberation Sans',sans-serif;-webkit-text-stroke:0.18px #111;transform-origin:0 0;transform:scaleX(0.8600);">245</div>
<div class="t" style="left:884.16px;top:665.84px;font-size:12px;line-height:16px;height:16px;letter-spacing:0.000px;color:#111;font-family:'Liberation Sans',sans-serif;-webkit-text-stroke:0.18px #111;transform-origin:0 0;transform:scaleX(0.8600);">250</div>
<div class="t" style="left:947.15px;top:665.84px;font-size:12px;line-height:16px;height:16px;letter-spacing:0.000px;color:#111;font-family:'Liberation Sans',sans-serif;-webkit-text-stroke:0.18px #111;transform-origin:0 0;transform:scaleX(0.8600);">255</div>
<div class="t" style="left:1010.14px;top:665.84px;font-size:12px;line-height:16px;height:16px;letter-spacing:0.000px;color:#111;font-family:'Liberation Sans',sans-serif;-webkit-text-stroke:0.18px #111;transform-origin:0 0;transform:scaleX(0.8600);">260</div>
<div class="t" style="left:1073.13px;top:665.84px;font-size:12px;line-height:16px;height:16px;letter-spacing:0.000px;color:#111;font-family:'Liberation Sans',sans-serif;-webkit-text-stroke:0.18px #111;transform-origin:0 0;transform:scaleX(0.8600);">265</div>
<div class="t" style="left:1136.12px;top:665.84px;font-size:12px;line-height:16px;height:16px;letter-spacing:0.000px;color:#111;font-family:'Liberation Sans',sans-serif;-webkit-text-stroke:0.18px #111;transform-origin:0 0;transform:scaleX(0.8600);">270</div>
<div class="t" style="left:1199.11px;top:665.84px;font-size:12px;line-height:16px;height:16px;letter-spacing:0.000px;color:#111;font-family:'Liberation Sans',sans-serif;-webkit-text-stroke:0.18px #111;transform-origin:0 0;transform:scaleX(0.8600);">275</div>
<div class="t" style="left:1262.10px;top:665.84px;font-size:12px;line-height:16px;height:16px;letter-spacing:0.000px;color:#111;font-family:'Liberation Sans',sans-serif;-webkit-text-stroke:0.18px #111;transform-origin:0 0;transform:scaleX(0.8600);">280</div>
<div class="t" style="left:1325.09px;top:665.84px;font-size:12px;line-height:16px;height:16px;letter-spacing:0.000px;color:#111;font-family:'Liberation Sans',sans-serif;-webkit-text-stroke:0.18px #111;transform-origin:0 0;transform:scaleX(0.8600);">285</div>
<div class="t" style="left:934.60px;top:683.24px;font-size:12px;line-height:16px;height:16px;letter-spacing:0.000px;color:#111;font-family:'Liberation Sans',sans-serif;-webkit-text-stroke:0.18px #111;transform-origin:0 0;transform:scaleX(0.9627);">Link Frequency (kHz)</div>
<div class="t" style="left:592.7px;top:434.5px;transform-origin:0 0;transform:rotate(-90deg) translate(0.00px,-11.16px);font-size:12px;line-height:14px;height:14px;letter-spacing:-0.352px;-webkit-text-stroke:0.18px #111">DSB Receiver Sensitivity (dBm)</div>
<div class="frame" style="left:570px;top:708px;width:83px;height:26px"></div>
<svg class="a" style="left:570px;top:708px" width="84" height="27" viewBox="570 708 84 27"><defs><linearGradient id="pb" x1="0" y1="0" x2="0" y2="1"><stop offset="0" stop-color="#e9e9e9"/><stop offset="1" stop-color="#c3c3c3"/></linearGradient><linearGradient id="pd" x1="0" y1="0" x2="0" y2="1"><stop offset="0" stop-color="#808080"/><stop offset="1" stop-color="#686868"/></linearGradient></defs><rect x="581.5" y="714" width="18.5" height="16" fill="url(#pb)"/><path d="M581.5 730H600V714" fill="none" stroke="#a6a6a6" stroke-width="1"/><rect x="601.3" y="714" width="17.5" height="16" fill="url(#pd)"/><rect x="623.2" y="714" width="18.5" height="16" fill="url(#pb)"/><path d="M623.2 730H641.7V714" fill="none" stroke="#a6a6a6" stroke-width="1"/><path d="M584.2 722.3H596.9M590.5 716.1V728.9" stroke="#0a0a0a" stroke-width="1.15" fill="none"/><circle cx="590.5" cy="722.3" r="1.3" fill="#d8d8d8" stroke="#0a0a0a" stroke-width="0.9"/><rect x="583" y="716.8" width="3.2" height="3" fill="#6d7260"/><path d="M609.8 723.6L604.8 728.8" stroke="#0a0a0a" stroke-width="2.3"/><path d="M609.4 724L605.2 728.4" stroke="#e8e8e8" stroke-width="0.8" stroke-dasharray="1.3 1.1"/><circle cx="612.6" cy="720.4" r="3.7" fill="#fff" stroke="#0a0a0a" stroke-width="1.2"/><path d="M610.2 720.4H615M612.6 718V722.8" stroke="#0a0a0a" stroke-width="1.15"/><rect x="603" y="716.5" width="3.6" height="3.4" fill="#80de6c"/><path d="M612.2 726.5H616.9L614.55 729.1Z" fill="#0a0a0a"/><rect x="625" y="717.2" width="3" height="2.8" fill="#6d7260"/><path d="M629.6 723V718.6a1.15 1.15 0 0 1 2.3 0V722 M631.9 721.5V717.4a1.25 1.25 0 0 1 2.5 0V721.5 M634.4 721.8V718.1a1.25 1.25 0 0 1 2.5 0V722.2 M636.9 722.2V720a0.8 0.8 0 0 1 1.5 0.2V724C638.4 726 637.2 727 636 728.4 M629.6 722.6V725L627.9 722.6C627.1 721.7 625.9 722.4 626.6 723.6L629.9 728.4" fill="none" stroke="#0a0a0a" stroke-width="1.05" stroke-linejoin="round" stroke-linecap="round"/></svg>
<div class="a" style="left:2px;top:739px;width:1361px;height:8px;background:linear-gradient(#f4f4f4 0,#dcdcdc 30%,#b4b4b4 70%,#8a8a8a 92%,#7c7c7c 100%)"></div>
<div class="a" style="left:2px;top:747px;width:1361px;height:18px;background:#d5d5d5"></div>
<div class="a" style="left:0;top:765px;width:1365px;height:2px;background:#23354f"></div>
<div class="t" style="left:5.00px;top:748.54px;font-size:12px;line-height:16px;height:16px;letter-spacing:0.000px;color:#111;font-family:'Liberation Sans',sans-serif;-webkit-text-stroke:0.18px #111;transform-origin:0 0;transform:scaleX(0.9335);">05:30:50 | Finished Sweep (-60,0 dB)</div>
</body></html>
